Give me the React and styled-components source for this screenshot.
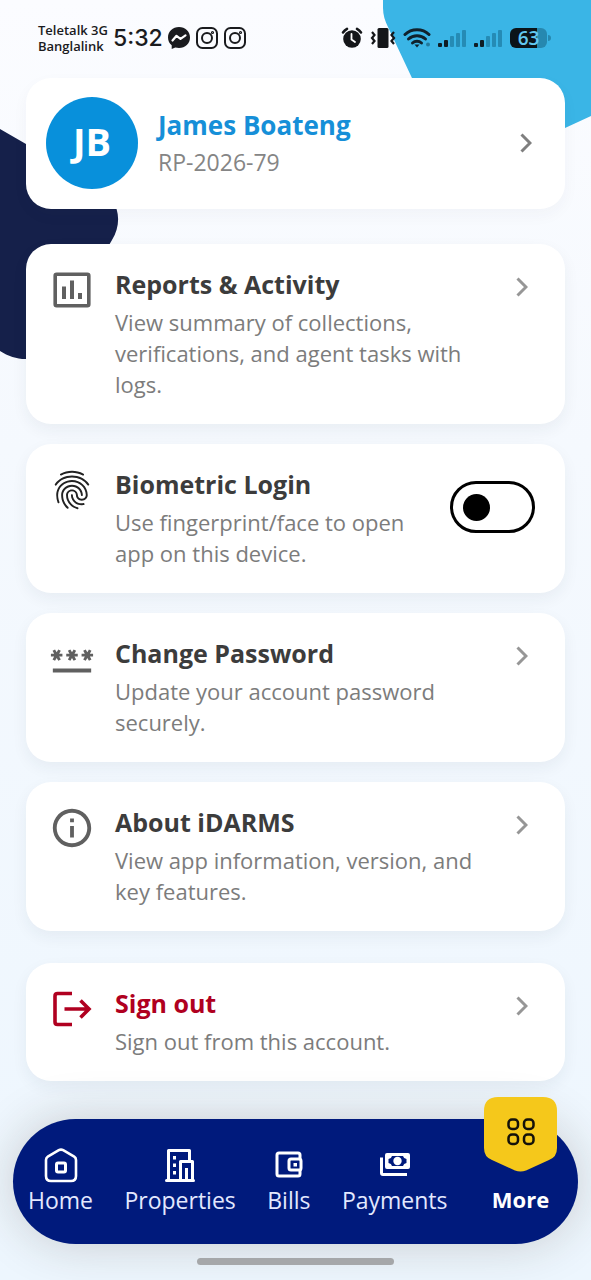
import React, { useState } from "react";
import styled, { createGlobalStyle } from "styled-components";
import { MdFingerprint, MdPassword, MdInfoOutline } from "react-icons/md";

const grey = "#606060";

export default function App() {
  const [biometric, setBiometric] = useState(false);

  return (
    <>
      <GlobalStyle />
      <Screen>
        <BlueShape />
        <NavyShape />
        <StatusBar />

        <Main>
          <ProfileCard href="#profile">
            <Avatar>JB</Avatar>
            <ProfileText>
              <Name>James Boateng</Name>
              <Code>RP-2026-79</Code>
            </ProfileText>
            <Chevron />
          </ProfileCard>

          <Cards>
            <LinkCard
              href="#reports"
              icon={<ReportsIcon />}
              title="Reports & Activity"
              text="View summary of collections, verifications, and agent tasks with logs."
            />
            <Card>
              <IconBox>
                <MdFingerprint size={46} color="#222" />
              </IconBox>
              <CardText>
                <Title as="label" htmlFor="biometric">
                  Biometric Login
                </Title>
                <Text>Use fingerprint/face to open app on this device.</Text>
              </CardText>
              <Toggle
                id="biometric"
                type="checkbox"
                role="switch"
                checked={biometric}
                onChange={(ev) => setBiometric(ev.target.checked)}
              />
            </Card>
            <LinkCard
              href="#password"
              icon={<MdPassword size={46} color={grey} />}
              title="Change Password"
              text="Update your account password securely."
            />
            <LinkCard
              href="#about"
              icon={<MdInfoOutline size={46} color={grey} />}
              title="About iDARMS"
              text="View app information, version, and key features."
            />
          </Cards>

          <LinkCard
            href="#signout"
            danger
            icon={<SignOutIcon />}
            title="Sign out"
            text="Sign out from this account."
          />
        </Main>

        <Nav>
          <NavItem href="#home">
            <HomeIcon />
            Home
          </NavItem>
          <NavItem href="#properties">
            <BuildingIcon />
            Properties
          </NavItem>
          <NavItem href="#bills">
            <WalletIcon />
            Bills
          </NavItem>
          <NavItem href="#payments">
            <MoneyIcon />
            Payments
          </NavItem>
          <MoreItem href="#more">
            <MoreTag />
            More
          </MoreItem>
        </Nav>
        <HomeIndicator />
      </Screen>
    </>
  );
}

const LinkCard = ({ href, icon, title, text, danger }) => (
  <Card as="a" href={href}>
    <IconBox>{icon}</IconBox>
    <CardText>
      <Title $danger={danger}>{title}</Title>
      <Text>{text}</Text>
    </CardText>
    <ChevronBox>
      <Chevron light />
    </ChevronBox>
  </Card>
);

// STATUS BAR
const StatusBar = () => (
  <Status>
    <StatusGroup>
      <Carriers>
        Teletalk 3G
        <br />
        Banglalink
      </Carriers>
      <Clock>5:32</Clock>
      <Notifications>
        <svg width="22" height="22" viewBox="0 0 22 22">
          <path
            d="M11 0C4.800 0 0 4.600 0 10.500c0 3.200 1.400 5.900 3.700 7.800V22l3.600-1.500c1.200.3 2.400.5 3.700.5 6.200 0 11-4.600 11-10.500S17.200 0 11 0z"
            fill="#1a1b1e"
          />
          <path
            d="M4.500 13.500l4-4.700 4 3 5-3.500"
            fill="none"
            stroke="#fff"
            strokeWidth="2.200"
            strokeLinejoin="round"
            strokeLinecap="round"
          />
        </svg>
        <CameraIcon />
        <CameraIcon />
      </Notifications>
    </StatusGroup>
    <Indicators>
      <svg width="22" height="22" viewBox="0 0 22 22">
        <circle cx="11" cy="12" r="8.800" fill="#141619" />
        <path
          d="M2 5.500a12 12 0 0 1 4-3.600M20 5.500a12 12 0 0 0-4-3.600"
          stroke="#141619"
          strokeWidth="2.600"
          strokeLinecap="round"
          fill="none"
        />
        <path d="M10.500 7v5.500l3.500 2.500" stroke="#fff" strokeWidth="1.800" fill="none" strokeLinecap="round" />
      </svg>
      <svg width="26" height="22" viewBox="0 0 26 22">
        <rect x="7.500" y="1" width="11" height="20" rx="1.500" fill="#141619" />
        <path
          d="M2 5l2.500 3L2 11l2.500 3L2 17M24 5l-2.500 3 2.500 3-2.500 3 2.500 3"
          stroke="#141619"
          strokeWidth="2.200"
          fill="none"
        />
      </svg>
      <svg width="28" height="22" viewBox="0 0 28 22">
        <g fill="none" stroke="#10222c" strokeWidth="3" strokeLinecap="round">
          <path d="M2 7.500c6.500-6.300 17.500-6.300 24 0" />
          <path d="M5.500 12c4.800-4.500 12.200-4.500 17 0" />
          <path d="M9.500 16c2.500-2.300 6.500-2.300 9 0" />
        </g>
        <path d="M11.500 17.500h5L14 20.500z" fill="#10222c" />
        <circle cx="25" cy="17.500" r="2" fill="#237a9d" />
      </svg>
      <SignalIcon />
      <SignalIcon />
      <Battery>63</Battery>
    </Indicators>
  </Status>
);

const CameraIcon = () => (
  <svg width="22" height="22" viewBox="0 0 22 22" fill="none" stroke="#1a1b1e" strokeWidth="2">
    <rect x="1" y="1" width="20" height="20" rx="5.500" />
    <circle cx="11" cy="11" r="5" />
    <circle cx="16.500" cy="5.500" r="0.600" />
  </svg>
);

const SignalIcon = () => (
  <svg width="29" height="18" viewBox="0 0 29 18">
    <rect x="0" y="14" width="4" height="4" rx="1" fill="#0f1d25" />
    <rect x="6" y="11" width="4" height="7" rx="1" fill="#0f1d25" />
    <g fill="#258bb5">
      <rect x="12" y="7" width="4" height="11" rx="1" />
      <rect x="18" y="4" width="4" height="14" rx="1" />
      <rect x="24" y="1" width="4" height="17" rx="1" />
    </g>
  </svg>
);

// BACKGROUND SHAPES
const BlueShape = () => (
  <TopShape width="208" height="140" viewBox="0 0 208 140">
    <path d="M0 0v8c0 7 2 13 5 19l39 83c8 18 28 30 50 30 40 0 60-2 88-12l26-12V0z" fill="#3ab5e6" />
  </TopShape>
);

const NavyShape = () => (
  <LeftShape width="120" height="232" viewBox="0 0 120 232">
    <path d="M0 0l97 56c21 12 27 36 15 55l-62 106c-11 17-33 16-50 5z" fill="#15204a" />
  </LeftShape>
);

// ICONS
const Chevron = ({ light }) => (
  <svg width="12" height="20" viewBox="0 0 12 20" fill="none" stroke={light ? "#969696" : "#7f7f7f"} strokeWidth="3">
    <path d="M1.500 1.500L10 10l-8.500 8.500" />
  </svg>
);

const ReportsIcon = () => (
  <svg width="38" height="36" viewBox="0 0 38 36" fill="none" stroke={grey}>
    <rect x="2.200" y="2.200" width="33.600" height="31.600" rx="1.500" strokeWidth="3.600" />
    <path d="M11 14.500V27M19 8.500V27M27 21v6" strokeWidth="4" />
  </svg>
);

const SignOutIcon = () => (
  <svg width="40" height="36" viewBox="0 0 40 36" fill="none" stroke="#b00020" strokeWidth="3.600">
    <path d="M20 2.500H5.500Q3 2.500 3 5v26q0 2.500 2.500 2.500H20" />
    <path d="M12.500 18H37M28.500 9.500L37 18l-8.500 8.500" />
  </svg>
);

const HomeIcon = () => (
  <svg width="36" height="36" viewBox="0 0 36 36" fill="none" stroke="#fff" strokeWidth="2.600">
    <path d="M15.800 3.200L4.800 9.600Q3 10.700 3 13v16q0 5 5 5h20q5 0 5-5V13q0-2.300-1.800-3.400l-11-6.400Q18 2 15.800 3.200z" />
    <rect x="13.500" y="16" width="9" height="9" rx="1.500" strokeWidth="3" />
  </svg>
);

const BuildingIcon = () => (
  <svg width="36" height="36" viewBox="0 0 36 36" fill="none" stroke="#fff" strokeWidth="3" strokeLinejoin="round">
    <path d="M4.500 33.500h27" strokeLinecap="round" />
    <path d="M6.500 33V3.500h21V13M18.500 33V14.500H30.500V33" />
    <path d="M24.500 33V21" />
    <path d="M12.500 9v3.500M12.500 16.500V20M12.500 24v3.500" />
  </svg>
);

const WalletIcon = () => (
  <svg width="36" height="36" viewBox="0 0 36 36" fill="none" stroke="#fff" strokeWidth="3">
    <path d="M29 12V8q0-2-2-2H8Q6 6 6 8v19q0 2 2 2h19q2 0 2-2v-4" />
    <rect x="18" y="12" width="12" height="11" rx="2" />
    <rect x="22.500" y="16" width="3.500" height="3.500" fill="#fff" stroke="none" />
  </svg>
);

const MoneyIcon = () => (
  <svg width="36" height="36" viewBox="0 0 36 36" fill="none" stroke="#fff" strokeWidth="3">
    <path d="M4.500 10.500v15.500q0 1.500 1.500 1.500h24" />
    <path
      d="M10 6h21q2 0 2 2v12q0 2-2 2H10q-2 0-2-2V8q0-2 2-2zm5 3q-.5 2.500-3.500 3v4q3 .5 3.500 3h11q.5-2.500 3.500-3v-4q-3-.5-3.500-3z"
      fill="#fff"
      fillRule="evenodd"
      stroke="none"
    />
    <circle cx="20.500" cy="14" r="4.200" fill="#fff" stroke="none" />
  </svg>
);

const MoreTag = () => (
  <Tag width="73" height="75" viewBox="0 0 73 75">
    <path
      d="M14 0h45q14 0 14 14v37q0 9-8 12L42 73.500q-5.500 2-11 0L8 63q-8-3-8-12V14Q0 0 14 0z"
      fill="#f5c81b"
    />
    <g fill="none" stroke="#15120a" strokeWidth="2.500">
      <rect x="24.500" y="22.500" width="9.500" height="9.500" rx="3.500" />
      <rect x="40" y="22.500" width="9.500" height="9.500" rx="3.500" />
      <rect x="24.500" y="37.500" width="9.500" height="9.500" rx="3.500" />
      <rect x="40" y="37.500" width="9.500" height="9.500" rx="3.500" />
    </g>
  </Tag>
);

const GlobalStyle = createGlobalStyle`
  * {
    box-sizing: border-box;
  }

  body {
    margin: 0;
    font-family: "Open Sans", "Noto Sans", sans-serif;
  }
`;

const Screen = styled.div`
  position: relative;
  display: flex;
  flex-direction: column;
  min-height: 100vh;
  overflow: hidden;
  background: linear-gradient(#fbfcff, #f5f9fe 35%, #edf6fe);
`;

const TopShape = styled.svg`
  position: absolute;
  top: 0;
  right: 0;
`;

const LeftShape = styled.svg`
  position: absolute;
  top: 129px;
  left: 0;
`;

const Status = styled.header`
  position: relative;
  display: flex;
  align-items: center;
  justify-content: space-between;
  height: 78px;
  padding: 0 44px 2px 38px;
  color: #1a1b1e;
`;

const StatusGroup = styled.div`
  display: flex;
  align-items: center;
  gap: 5px;
`;

const Carriers = styled.div`
  font-size: 13px;
  font-weight: 600;
  line-height: 16px;
`;

const Clock = styled.div`
  font-family: Inter, sans-serif;
  font-size: 23px;
  font-weight: 500;
`;

const Notifications = styled.div`
  display: flex;
  gap: 6px;
`;

const Indicators = styled.div`
  display: flex;
  align-items: center;
  gap: 7px;
`;

const Battery = styled.div`
  position: relative;
  width: 37px;
  height: 20px;
  border-radius: 6px;
  background: linear-gradient(90deg, #0b1419 72%, #2688b0 72%);
  color: #62c8f0;
  font-size: 19px;
  font-weight: 600;
  line-height: 20px;
  text-align: center;

  &::after {
    content: "";
    position: absolute;
    top: 7px;
    right: -4px;
    width: 3px;
    height: 6px;
    border-radius: 0 3px 3px 0;
    background: #2688b0;
  }
`;

const Main = styled.main`
  position: relative;
  display: flex;
  flex-direction: column;
  padding: 0 26px;
`;

const Cards = styled.div`
  display: flex;
  flex-direction: column;
  gap: 20px;
  margin: 35px 0 32px;
`;

const Card = styled.div`
  display: flex;
  align-items: flex-start;
  padding: 25px 30px 24px 20px;
  border-radius: 25px;
  background: #fff;
  box-shadow: 0 6px 16px rgba(40, 50, 70, 0.06);
  text-decoration: none;
`;

const ProfileCard = styled.a`
  display: flex;
  align-items: center;
  gap: 20px;
  padding: 19px 33px 20px 20px;
  border-radius: 25px;
  background: #fff;
  box-shadow: 0 6px 16px rgba(40, 50, 70, 0.04);
  text-decoration: none;
`;

const Avatar = styled.div`
  display: flex;
  align-items: center;
  justify-content: center;
  width: 92px;
  height: 92px;
  padding-bottom: 4px;
  border-radius: 50%;
  background: #0890db;
  color: #fff;
  font-size: 38px;
  font-weight: 700;
`;

const ProfileText = styled.div`
  flex: 1;
`;

const Name = styled.h1`
  margin: 0 0 6px;
  color: #168fd8;
  font-size: 26px;
  font-weight: 700;
  line-height: 32px;
`;

const Code = styled.p`
  margin: 0;
  color: #858585;
  font-size: 23px;
  line-height: 31px;
`;

const IconBox = styled.div`
  display: flex;
  align-items: center;
  justify-content: center;
  flex: none;
  width: 52px;
  height: 42px;
  margin-right: 17px;
`;

const CardText = styled.div`
  flex: 1;
`;

const Title = styled.h2`
  display: block;
  margin: 0 0 8px;
  color: ${(props) => (props.$danger ? "#b00020" : "#3c3c3c")};
  font-size: 25px;
  font-weight: 700;
  line-height: 30px;
`;

const Text = styled.p`
  margin: 0;
  color: #7c7c7c;
  font-size: 22px;
  line-height: 31px;
`;

const ChevronBox = styled.div`
  display: flex;
  align-items: center;
  height: 36px;
  padding: 0 7px 0 24px;
`;

const Toggle = styled.input`
  appearance: none;
  display: flex;
  align-items: center;
  flex: none;
  width: 85px;
  height: 52px;
  margin: 12px 0 0 24px;
  padding: 0 10px;
  border: 3px solid #000;
  border-radius: 26px;
  background: #fff;
  cursor: pointer;

  &::before {
    content: "";
    width: 27px;
    height: 27px;
    border-radius: 50%;
    background: #000;
  }

  &:checked {
    justify-content: flex-end;
  }
`;

const Nav = styled.nav`
  position: relative;
  display: flex;
  justify-content: space-between;
  height: 125px;
  margin: auto 13px 0;
  padding: 28px 21px 0 15px;
  border-radius: 63px;
  background: #001a7c;
  box-shadow: 0 0 50px rgba(50, 40, 20, 0.2);
`;

const NavItem = styled.a`
  display: flex;
  flex-direction: column;
  align-items: center;
  color: #e3e8ff;
  font-size: 23px;
  line-height: 34px;
  text-decoration: none;
`;

const MoreItem = styled(NavItem)`
  position: relative;
  width: 73px;
  margin-left: 5px;
  padding-top: 35px;
  color: #fff;
  font-size: 22px;
  font-weight: 700;
`;

const Tag = styled.svg`
  position: absolute;
  top: -50px;
  left: 0;
`;

const HomeIndicator = styled.div`
  position: relative;
  width: 33.333%;
  height: 7px;
  margin: 14px auto 15px;
  border-radius: 4px;
  background: #a5a7a9;
`;
